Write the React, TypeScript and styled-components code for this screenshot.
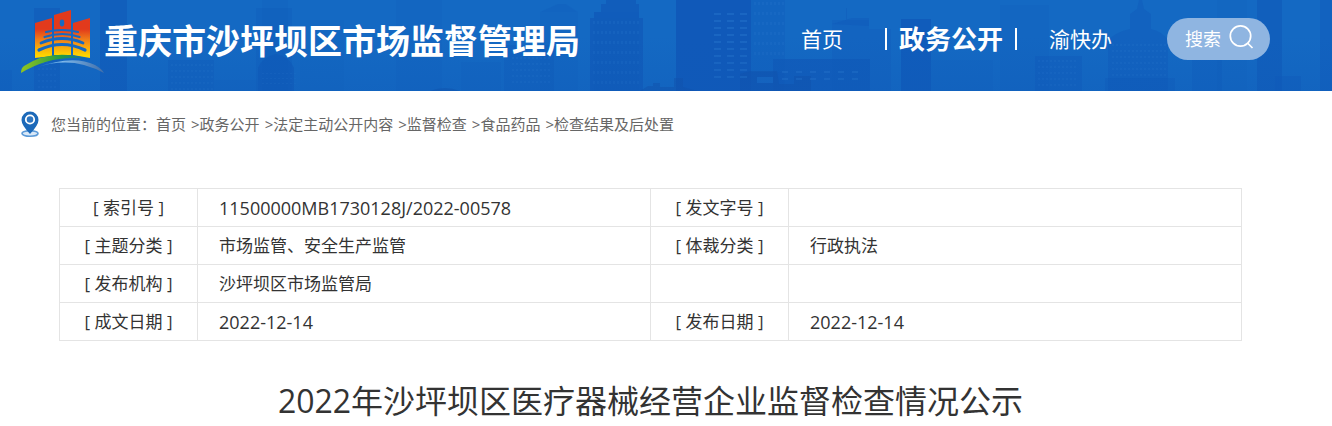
import React from 'react';
import styled, { createGlobalStyle } from 'styled-components';

const GlobalStyle = createGlobalStyle`
  * { box-sizing: border-box; }
  body {
    margin: 0;
    background: #fff;
    color: #333;
    font-family: "Open Sans", "Noto Sans CJK SC", sans-serif;
  }
  a { color: inherit; text-decoration: none; }
`;

const Header = styled.header`
  position: relative;
  display: flex;
  align-items: center;
  height: 91px;
  padding: 0 62px 0 20px;
  background: #1469c3;
  color: #fff;
  overflow: hidden;
`;

const SkylineArt = styled.svg`
  position: absolute;
  inset: 0;
  width: 100%;
  height: 100%;
`;

const Brand = styled.a`
  position: relative;
  display: flex;
  align-items: center;
  white-space: nowrap;
`;

const LogoArt = styled.svg`
  display: block;
  flex: none;
  width: 84px;
  height: 75px;
`;

const SiteName = styled.span`
  font-size: 34px;
  font-weight: 700;
  line-height: 48px;
  padding-bottom: 10px;
`;

const Nav = styled.nav`
  position: relative;
  display: flex;
  align-items: center;
  margin-left: auto;
  padding-bottom: 14px;
  white-space: nowrap;
`;

const NavLink = styled.a<{ $active?: boolean }>`
  display: flex;
  align-items: center;
  font-size: ${(p) => (p.$active ? 26 : 21)}px;
  font-weight: ${(p) => (p.$active ? 700 : 400)};
  line-height: 40px;
  margin: ${(p) => (p.$active ? '0 32px 0 42px' : '0')};
  gap: 12px;

  &::before,
  &::after {
    content: ${(p) => (p.$active ? '""' : 'none')};
    width: 2px;
    height: 22px;
    background: #fff;
  }
`;

const SearchButton = styled.button`
  display: flex;
  align-items: center;
  gap: 8px;
  height: 42px;
  margin-left: 55px;
  padding: 0 16px 0 18px;
  border: 0;
  border-radius: 21px;
  background: #8fb5e1;
  color: #fff;
  font-family: inherit;
  font-size: 18px;
  line-height: 24px;
  cursor: pointer;

  svg {
    margin-bottom: 4px;
  }
`;

const Breadcrumb = styled.nav`
  display: flex;
  align-items: center;
  height: 66px;
  padding-left: 20px;
  color: #666;
  font-size: 15px;
  line-height: 24px;
  white-space: nowrap;
`;

const CrumbLabel = styled.span`
  margin-left: 11px;
`;

const CrumbList = styled.ol`
  display: flex;
  margin: 0;
  padding: 0;
  list-style: none;
`;

const Crumb = styled.li`
  & + &::before {
    content: ">";
    margin-left: 5px;
  }
`;

const Article = styled.main`
  padding: 31px 90px 0 59px;
`;

const InfoTable = styled.table`
  width: 100%;
  table-layout: fixed;
  border-collapse: collapse;
  font-size: 17px;
  line-height: 24px;
`;

const LabelCell = styled.th`
  width: 138px;
  height: 38px;
  padding: 0;
  border: 1px solid #e4e4e4;
  font-weight: 400;
  text-align: center;
`;

const ValueCell = styled.td<{ $numeric?: boolean }>`
  height: 38px;
  padding: 0 21px;
  border: 1px solid #e4e4e4;
  font-size: ${(p) => (p.$numeric ? 18 : 17)}px;
`;

const Title = styled.h1`
  margin: 36px 0 0;
  font-size: 32px;
  font-weight: 400;
  line-height: 48px;
  text-align: center;
`;

/* x, y, width, opacity of each tower; all reach the bottom edge */
const towers = [
  [34, 8, 26, 0.5], [0, 70, 12, 0.3], [100, 0, 27, 0.6], [168, 60, 46, 0.35], [214, 80, 44, 0.2],
  [256, 8, 36, 0.3], [262, 0, 26, 0.2], [300, 20, 44, 0.12], [396, 0, 46, 0.2],
  [461, 62, 40, 0.2], [504, 45, 50, 0.35], [540, 12, 38, 0.2], [590, 18, 53, 0.7],
  [594, 12, 45, 0.2], [676, 0, 75, 0.9], [751, 0, 34, 0.3], [832, 20, 37, 0.25],
  [869, 29, 22, 0.25], [773, 59, 97, 0.7], [740, 72, 44, 0.5], [901, 19, 30, 0.75],
  [931, 60, 62, 0.2], [1000, 5, 49, 0.2], [1035, 56, 47, 0.4], [1105, 78, 70, 0.35],
  [1192, 60, 30, 0.3], [1217, 0, 30, 0.12], [1257, 0, 25, 0.6], [1275, 76, 26, 0.4],
  [1320, 0, 12, 0.4],
];

/* x, y, columns, rows, horizontal step, vertical step, pane width, pane height */
const windowGrids = [
  [714, 13, 3, 10, 13, 7, 7, 2], [782, 71, 6, 2, 14, 7, 6, 2],
  [593, 21, 12, 7, 4, 10, 2, 3], [171, 64, 11, 5, 4, 6, 2, 2],
  [512, 51, 10, 6, 4, 6, 2, 2], [754, 2, 8, 6, 4, 10, 2, 3],
  [1112, 44, 14, 6, 4, 6, 2, 2], [1038, 60, 10, 5, 4, 6, 2, 2],
  [262, 73, 9, 3, 4, 5, 2, 1], [38, 50, 5, 7, 4, 6, 2, 2],
];

function Skyline() {
  return (
    <SkylineArt viewBox="0 0 1332 91" preserveAspectRatio="xMidYMax slice" aria-hidden="true">
      <defs>
        <linearGradient id="haze" x1="0" y1="0" x2="0" y2="1">
          <stop offset="0.4" stopColor="#0f59b7" stopOpacity="0" />
          <stop offset="1" stopColor="#0f59b7" stopOpacity="0.3" />
        </linearGradient>
      </defs>
      {towers.map(([x, y, w, o], i) => (
        <rect key={i} x={x} y={y} width={w} height={91 - y} fill="#0f58b8" opacity={o} />
      ))}
      <path fill="#0f58b8" opacity="0.7" d="M594 18V12h7V4h5V0h30v4h3v14z" />
      <path fill="#0f58b8" opacity="0.3" d="M540 12l18-8h8l12 8z" />
      <path fill="#0f58b8" opacity="0.6" d="M258 91V68q4-11 18-14q14 3 18 14v23z" />
      <path fill="#0f58b8" opacity="0.4" d="M1108 91V40q8-8 22-11V14l7-5 2-9h3l2 9 7 5v15q12 3 17 11v51z" />
      <path fill="#0f4fa9" opacity="0.5" d="M640 91l8-5h5v-3h7v4h14v-9h9v9l14 4zM430 91q15-6 30 0zM740 91V74l10-3h27l2 13h15v-8h17v15z" />
      <path fill="#1b70ca" opacity="0.6" d="M757 77h16v6h-16z" />
      <path fill="#0f58b8" opacity="0.4" d="M846 20V8h1v12zM832 24l20-6h17v8z" />
      {windowGrids.map(([x, y, cols, rows, dx, dy, w, h], g) => (
        <g key={g} fill="#2a7ad0" opacity={w > 3 ? 0.4 : 0.22}>
          {Array.from({ length: cols * rows }, (_, n) => (
            <rect key={n} x={x + (n % cols) * dx} y={y + Math.floor(n / cols) * dy} width={w} height={h} />
          ))}
        </g>
      ))}
      <rect width="1332" height="91" fill="url(#haze)" />
    </SkylineArt>
  );
}

function Logo() {
  return (
    <LogoArt viewBox="20 8 84 75" aria-hidden="true">
      <defs>
        <linearGradient id="hall" gradientUnits="userSpaceOnUse" x1="0" y1="10" x2="0" y2="58">
          <stop offset="0.4" stopColor="#e23a1c" />
          <stop offset="0.62" stopColor="#f08019" />
          <stop offset="0.95" stopColor="#ffd500" />
        </linearGradient>
        <linearGradient id="hill" x1="0" x2="1">
          <stop offset="0" stopColor="#93c51e" />
          <stop offset="0.6" stopColor="#239b45" />
          <stop offset="1" stopColor="#1469b0" />
        </linearGradient>
        <linearGradient id="river" x1="0" x2="1">
          <stop offset="0" stopColor="#2d86d8" />
          <stop offset="0.4" stopColor="#7db8ea" />
          <stop offset="1" stopColor="#426fa9" />
        </linearGradient>
      </defs>
      <g fill="url(#hall)">
        <path d="M35 23l17-5v38l-17 2z" />
        <path d="M54 15l17-5v45H54z" />
        <path d="M73 23l17-5v40l-17-3z" />
      </g>
      <ellipse cx="62" cy="23" rx="2.3" ry="3.4" fill="#1469c3" />
      <g fill="none" stroke="#1469c3" strokeLinecap="round">
        <path d="M46 32q16-4 32 0" strokeWidth="2.2" />
        <path d="M44.500 37q18-6 35 0" strokeWidth="2.2" />
        <path d="M41 43q21-9 42 0" strokeWidth="2.8" />
        <path d="M39 50q23-11 46 0" strokeWidth="3.2" />
      </g>
      <path d="M53 31v25M72 31v25" stroke="#1469c3" strokeWidth="1" />
      <path fill="url(#hill)" d="M21 73q0-5 3-7q28-18 64-7q-36-5-67 14z" />
      <path fill="url(#river)" d="M35 68q38-14 60-3q7 4 9 8q-9-5-20-8q-23-6-49 3z" />
    </LogoArt>
  );
}

function SearchIcon() {
  return (
    <svg width="25" height="26" viewBox="0 0 25 26" fill="none" stroke="#fff" strokeWidth="1.7" aria-hidden="true">
      <circle cx="11.5" cy="12" r="10.2" />
      <path d="M18.500 19l5 5" />
    </svg>
  );
}

function PinIcon() {
  return (
    <svg width="20" height="26" viewBox="0 0 20 26" aria-hidden="true">
      <ellipse cx="10" cy="22.5" rx="8" ry="2.7" fill="#d9e8f7" stroke="#5b9ad8" strokeWidth="1.6" />
      <path fill="#1c69b9" d="M10 23Q1.500 14 1.500 9a8.500 8.500 0 0 1 17 0Q18.500 14 10 23z" />
      <circle cx="10" cy="8.5" r="4.2" fill="#2d75c0" stroke="#fff" strokeWidth="1.8" />
    </svg>
  );
}

const crumbs = ['首页', '政务公开', '法定主动公开内容', '监督检查', '食品药品', '检查结果及后处置'];

const rows = [
  ['[ 索引号 ]', '11500000MB1730128J/2022-00578', '[ 发文字号 ]', ''],
  ['[ 主题分类 ]', '市场监管、安全生产监管', '[ 体裁分类 ]', '行政执法'],
  ['[ 发布机构 ]', '沙坪坝区市场监管局', '', ''],
  ['[ 成文日期 ]', '2022-12-14', '[ 发布日期 ]', '2022-12-14'],
];

const isNumeric = (value: string) => /^\d/.test(value);

export default function App() {
  return (
    <>
      <GlobalStyle />
      <Header>
        <Skyline />
        <Brand href="#">
          <Logo />
          <SiteName>重庆市沙坪坝区市场监督管理局</SiteName>
        </Brand>
        <Nav>
          <NavLink href="#">首页</NavLink>
          <NavLink href="#" $active>政务公开</NavLink>
          <NavLink href="#">渝快办</NavLink>
          <SearchButton type="button">
            搜索
            <SearchIcon />
          </SearchButton>
        </Nav>
      </Header>
      <Breadcrumb>
        <PinIcon />
        <CrumbLabel>您当前的位置：</CrumbLabel>
        <CrumbList>
          {crumbs.map((crumb) => (
            <Crumb key={crumb}>
              <a href="#">{crumb}</a>
            </Crumb>
          ))}
        </CrumbList>
      </Breadcrumb>
      <Article>
        <InfoTable>
          <tbody>
            {rows.map(([labelA, valueA, labelB, valueB]) => (
              <tr key={labelA}>
                <LabelCell scope="row">{labelA}</LabelCell>
                <ValueCell $numeric={isNumeric(valueA)}>{valueA}</ValueCell>
                <LabelCell scope="row">{labelB}</LabelCell>
                <ValueCell $numeric={isNumeric(valueB)}>{valueB}</ValueCell>
              </tr>
            ))}
          </tbody>
        </InfoTable>
        <Title>2022年沙坪坝区医疗器械经营企业监督检查情况公示</Title>
      </Article>
    </>
  );
}
